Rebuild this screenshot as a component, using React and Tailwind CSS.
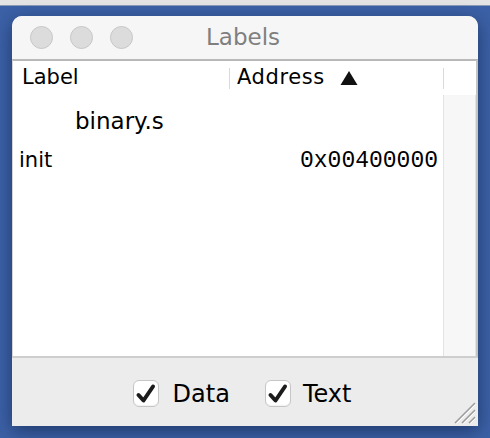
import React from 'react';

const Check = () => (
  <span className="w-[26px] h-[27px] rounded-[6px] border border-[#c6c6c6] bg-white flex items-center justify-center shadow-[inset_0_-1px_1px_rgba(0,0,0,0.06)]">
    <svg width="22" height="22" viewBox="0 0 22 22">
      <path d="M3.5 12 L8.5 17.5 L18 3.5" fill="none" stroke="#1c1c1c" strokeWidth="4" strokeLinecap="round" strokeLinejoin="round" />
    </svg>
  </span>
);

export default function App() {
  return (
    <div className="w-[490px] h-[438px] overflow-hidden bg-[#3c61a6] font-['DejaVu_Sans',sans-serif]">
      {/* desktop top strip */}
      <div className="h-[6px] bg-[#e4e4e4] border-b border-[#8a9bb8]" />

      <div className="pt-[10px] pl-[12px]">
        <div className="relative w-[466px] h-[410px] rounded-t-[10px] bg-[#ececec] shadow-[0_5px_18px_rgba(10,25,60,0.55)] flex flex-col">
          {/* title bar */}
          <div className="relative h-[43px] rounded-t-[10px] bg-[#f6f6f6] flex items-center pl-[18px] gap-[17px]">
            <span className="w-[23px] h-[23px] rounded-full bg-[#dcdcdc] border border-[#c7c7c7]" />
            <span className="w-[23px] h-[23px] rounded-full bg-[#dcdcdc] border border-[#c7c7c7]" />
            <span className="w-[23px] h-[23px] rounded-full bg-[#dcdcdc] border border-[#c7c7c7]" />
            <div className="absolute inset-x-0 top-0 h-[43px] flex items-center justify-center pr-[4px] text-[23px] text-[#7f7f7f] pointer-events-none">
              Labels
            </div>
          </div>

          {/* table scroll pane */}
          <div className="h-[299px] border-t-2 border-b-2 border-r-2 border-l border-t-[#b9b9b9] border-b-[#cecece] border-r-[#c4c4c4] border-l-[#d4d4d4] bg-white flex flex-col">
            <div className="h-[34px] flex items-center text-[21px] text-black">
              <div className="w-[216px] pl-[9px]">Label</div>
              <div className="w-px h-[21px] bg-[#dadada]" />
              <div className="w-[213px] pl-[7px] flex items-center gap-[15px]">
                <span className="tracking-[0.6px]">Address</span>
                <svg width="18" height="16" viewBox="0 0 18 16">
                  <polygon points="9,1 17.5,15 0.5,15" fill="#111" />
                </svg>
              </div>
              <div className="w-px h-[21px] bg-[#dadada]" />
              <div className="flex-1" />
            </div>

            <div className="flex-1 flex">
              <div className="w-[430px] pt-[12px]">
                <div className="pl-[62px] text-[23px] leading-[28px] text-black">binary.s</div>
                <div className="mt-[11px] flex items-baseline leading-[28px] text-black">
                  <span className="pl-[6px] text-[21px]">init</span>
                  <span className="ml-auto pr-[5px] text-[23px] font-['Liberation_Mono',monospace]">0x00400000</span>
                </div>
              </div>
              <div className="flex-1 border-l border-r border-[#e3e3e3] bg-[#f7f7f7]" />
            </div>
          </div>

          {/* bottom panel */}
          <div className="flex-1 flex items-center justify-center pt-[3px] pr-[6px] text-[24px] text-black">
            <label className="flex items-center gap-[14px]">
              <Check />
              <span>Data</span>
            </label>
            <label className="ml-[35px] flex items-center gap-[12px]">
              <Check />
              <span>Text</span>
            </label>
          </div>

          {/* resize grip */}
          <svg className="absolute right-[2px] bottom-[2px]" width="22" height="22" viewBox="0 0 22 22">
            <path d="M1 21 L21 1 M8 21 L21 8 M15 21 L21 15" stroke="#9c9c9c" strokeWidth="1.5" />
            <path d="M2.5 21.5 L21.5 2.5 M9.5 21.5 L21.5 9.5 M16.5 21.5 L21.5 16.5" stroke="#ffffff" strokeWidth="1" />
          </svg>
        </div>
      </div>
    </div>
  );
}
